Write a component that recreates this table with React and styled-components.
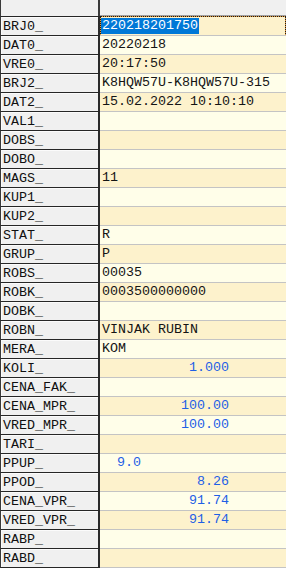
import React from "react";
import styled, { createGlobalStyle } from "styled-components";

const GlobalStyle = createGlobalStyle`
  html, body {
    margin: 0;
    padding: 0;
    background: #ffffff;
  }
  body {
    font-family: "Liberation Mono", "Courier New", monospace;
    font-size: 10pt;
  }
`;

const Grid = styled.div`
  width: 286px;
  display: flex;
  flex-direction: column;
`;

const HeaderRow = styled.div`
  display: grid;
  grid-template-columns: 100px 1fr;
  height: 16px;
  background: #f0f0f0;
`;

const HeaderCorner = styled.div`
  border-left: 1px solid #3a3a3a;
  border-right: 2px solid #3a3a3a;
  background: #f0f0f0;
`;

const HeaderFill = styled.div`
  border-bottom: 1px solid #a0a0a0;
`;

const Row = styled.div`
  display: grid;
  grid-template-columns: 100px 1fr;
  height: 19px;
  box-sizing: border-box;
  &:last-child {
    height: 20px;
  }
`;

const Label = styled.div`
  box-sizing: border-box;
  display: flex;
  align-items: center;
  padding-left: 2px;
  background: #f0f0f0;
  color: #101010;
  border-top: 1px solid #262626;
  border-left: 1px solid #3a3a3a;
  border-right: 2px solid #2a2a2a;
  box-shadow: inset 1px 1px 0 #fbfbfb;
  ${Row}:last-child & {
    border-bottom: 1px solid #262626;
  }
`;

const Cell = styled.div`
  position: relative;
  box-sizing: border-box;
  display: flex;
  align-items: center;
  padding-left: 1px;
  white-space: pre;
  color: #141414;
  background: ${(p) => (p.$odd ? "#fdf2cc" : "#fffee9")};
  border-top: 1px solid ${(p) => (p.$first ? "#a0a0a0" : "#c4c4c4")};
  ${Row}:last-child & {
    border-bottom: 1px solid #c4c4c4;
  }
  ${(p) =>
    p.$focus &&
    `
    &::after {
      content: "";
      position: absolute;
      left: 0;
      right: 0;
      top: -1px;
      bottom: -1px;
      border: 1px dotted #1a1a1a;
      background: transparent;
      pointer-events: none;
    }
    &::before {
      content: "";
      position: absolute;
      left: 0;
      right: 0;
      top: -1px;
      bottom: -1px;
      border: 1px solid #e39a3c;
      pointer-events: none;
    }
  `}
`;

const Text = styled.span`
  padding: 0 1px;
  line-height: 16px;
  background: ${(p) => (p.$selected ? "#0078d7" : "transparent")};
  color: ${(p) => (p.$selected ? "#ffffff" : "inherit")};
`;

const Num = styled.span`
  display: inline-block;
  width: ${(p) => p.$w}px;
  text-align: right;
  color: #1f5fe6;
  line-height: 16px;
`;

const rows = [
  { label: "BRJ0_", text: "220218201750", focus: true },
  { label: "DAT0_", text: "20220218" },
  { label: "VRE0_", text: "20:17:50" },
  { label: "BRJ2_", text: "K8HQW57U-K8HQW57U-315" },
  { label: "DAT2_", text: "15.02.2022 10:10:10" },
  { label: "VAL1_" },
  { label: "DOBS_" },
  { label: "DOBO_" },
  { label: "MAGS_", text: "11" },
  { label: "KUP1_" },
  { label: "KUP2_" },
  { label: "STAT_", text: "R" },
  { label: "GRUP_", text: "P" },
  { label: "ROBS_", text: "00035" },
  { label: "ROBK_", text: "0003500000000" },
  { label: "DOBK_" },
  { label: "ROBN_", text: "VINJAK RUBIN" },
  { label: "MERA_", text: "KOM" },
  { label: "KOLI_", num: "1.000" },
  { label: "CENA_FAK_" },
  { label: "CENA_MPR_", num: "100.00" },
  { label: "VRED_MPR_", num: "100.00" },
  { label: "TARI_" },
  { label: "PPUP_", num: "9.0", w: 40 },
  { label: "PPOD_", num: "8.26" },
  { label: "CENA_VPR_", num: "91.74" },
  { label: "VRED_VPR_", num: "91.74" },
  { label: "RABP_" },
  { label: "RABD_" },
];

export default function App() {
  return (
    <>
      <GlobalStyle />
      <Grid>
        <HeaderRow>
          <HeaderCorner />
          <HeaderFill />
        </HeaderRow>
        {rows.map((r, i) => (
          <Row key={r.label}>
            <Label>{r.label}</Label>
            <Cell $odd={i % 2 === 0} $first={i === 0} $focus={r.focus}>
              {r.text && <Text $selected={r.focus}>{r.text}</Text>}
              {r.num && <Num $w={r.w || 128}>{r.num}</Num>}
            </Cell>
          </Row>
        ))}
      </Grid>
    </>
  );
}
